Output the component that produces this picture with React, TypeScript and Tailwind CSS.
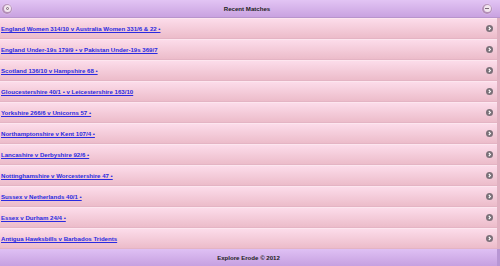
const matches = [
    "England Women 314/10 v Australia Women 331/6 & 22 •",
    "England Under-19s 179/9 • v Pakistan Under-19s 369/7",
    "Scotland 136/10 v Hampshire 68 •",
    "Gloucestershire 40/1 • v Leicestershire 163/10",
    "Yorkshire 266/6 v Unicorns 57 •",
    "Northamptonshire v Kent 107/4 •",
    "Lancashire v Derbyshire 92/6 •",
    "Nottinghamshire v Worcestershire 47 •",
    "Sussex v Netherlands 40/1 •",
    "Essex v Durham 24/4 •",
    "Antigua Hawksbills v Barbados Tridents",
];

function HeaderButton({ minus }: { minus?: boolean }) {
    return (
        <span className="flex size-[10px] items-center justify-center rounded-full bg-[#a07a9a]/60 shadow-[0_0_1px_#fff]">
            <span className="flex size-[7px] items-center justify-center rounded-full bg-[#f2e6ee]">
                {minus ? (
                    <span className="h-[1px] w-[4px] bg-[#7a6a78]" />
                ) : (
                    <span className="size-[3px] rounded-full border border-[#7a6a78]" />
                )}
            </span>
        </span>
    );
}

function ArrowIcon() {
    return (
        <svg width="7" height="7" viewBox="0 0 8 8">
            <circle cx="4" cy="4" r="4" fill="#7a7078" />
            <path d="M3.2 2.2 L5 4 L3.2 5.8" stroke="#fff" strokeWidth="1.3" fill="none" />
        </svg>
    );
}

export default function App() {
    return (
        <div className="flex h-[266px] w-[500px] flex-col overflow-hidden font-['Liberation_Sans',Arial,sans-serif] text-[6.1px]">
            <div className="flex h-[18px] shrink-0 items-center justify-between border-b border-[#b894cc] bg-gradient-to-b from-[#e2c4f4] to-[#c9a2e0] pl-[2px] pr-[8px]">
                <HeaderButton />
                <span className="font-bold text-[#222]">Recent Matches</span>
                <HeaderButton minus />
            </div>
            <div className="flex flex-col border-r-[3px] border-[#e0b0c0]">
                {matches.map((m) => (
                    <div
                        key={m}
                        className="flex h-[21px] items-center justify-between border-t border-[#fde6ef] border-b border-b-[#e4b4c4] bg-gradient-to-b from-[#fcdcea] to-[#ecbcca] pr-[4px] pl-[1px]"
                    >
                        <a href="#" className="font-bold text-[#2a2ae0] underline">
                            {m}
                        </a>
                        <ArrowIcon />
                    </div>
                ))}
            </div>
            <div className="flex flex-1 items-center justify-center border-r-[3px] border-[#b896d4] bg-gradient-to-b from-[#dfc0f4] to-[#c6a0e0] font-bold text-[#222]">
                Explore Erode © 2012
            </div>
        </div>
    );
}
